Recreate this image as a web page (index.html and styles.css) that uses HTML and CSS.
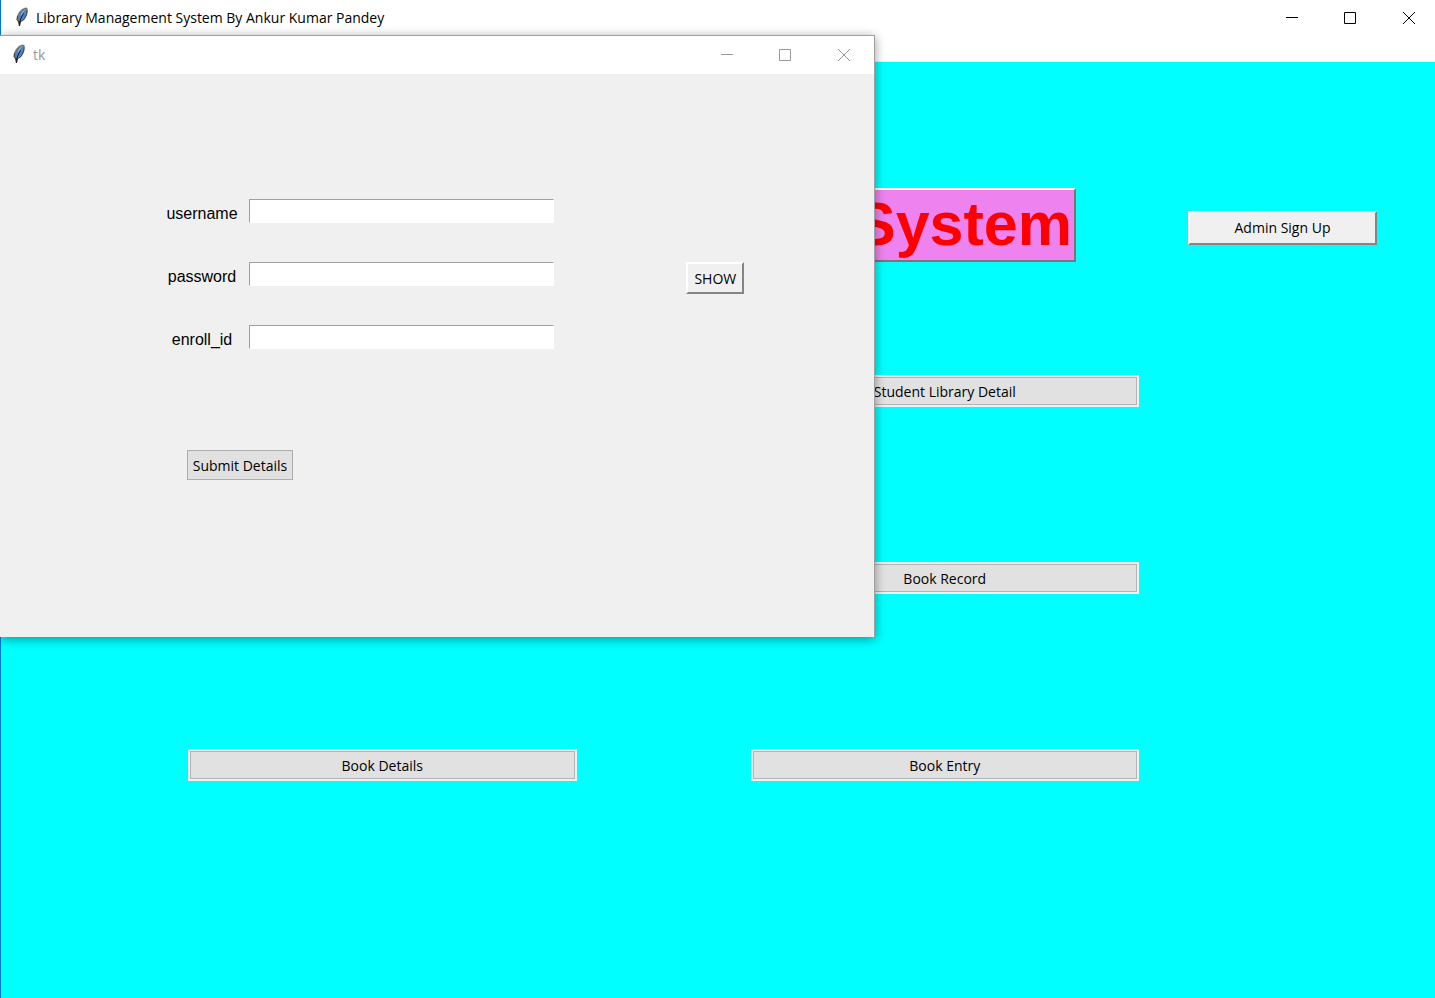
FILE: index.html
```
<!DOCTYPE html>
<html lang="en">
<head>
<meta charset="utf-8">
<title>Library Management System By Ankur Kumar Pandey</title>
<link rel="stylesheet" href="styles.css">
</head>
<body>
<svg class="symbols" aria-hidden="true">
  <symbol id="feather" viewBox="0 0 14 20">
    <path d="M10.500 .5 12.500 1 12.500 5 11.500 9 9.500 12.500 6.500 15 3 15 1.500 12.500 2 9 4 5 7 2z" fill="#77736d"/>
    <path d="M10.500 1.500 11.500 2 11.500 5.500 10.500 9 8.500 12 6 14 4 13.500 3.500 11.500 5 7 7.500 3.500z" fill="#4a86cc"/>
    <path d="M10 2.500 7.500 5 6 8.500" fill="none" stroke="#8fbcec"/>
    <path d="M12.200 3 11.800 7 10 11 7 14.200M2.500 9 2.200 12.500 3.500 14.500" fill="none" stroke="#3a3835" stroke-width=".8"/>
    <path d="M8.500 6.500 6.500 10 5 14 4.300 19" fill="none" stroke="#0b1219"/>
    <path d="M3 14.500h3l-1 4.500H4z" fill="#24211e"/>
  </symbol>
  <symbol id="minimize" viewBox="0 0 12 12"><path d="M0 5.500h12" fill="none" stroke="currentColor"/></symbol>
  <symbol id="maximize" viewBox="0 0 12 12"><path d="M.5 .5h11v11H.5z" fill="none" stroke="currentColor"/></symbol>
  <symbol id="close" viewBox="0 0 12 12"><path d="M0 0 12 12M12 0 0 12" fill="none" stroke="currentColor"/></symbol>
</svg>

<main class="window">
  <header class="titlebar">
    <svg class="feather"><use href="#feather"/></svg>
    <span class="title">Library Management System By Ankur Kumar Pandey</span>
    <div class="controls">
      <button type="button" aria-label="Minimize"><svg><use href="#minimize"/></svg></button>
      <button type="button" aria-label="Maximize"><svg><use href="#maximize"/></svg></button>
      <button type="button" aria-label="Close"><svg><use href="#close"/></svg></button>
    </div>
  </header>
  <div class="menubar"></div>
  <div class="workspace">
    <div class="banner">
      <h1 class="heading">System</h1>
      <button type="button" class="raised signup">Admin Sign Up</button>
    </div>
    <nav class="actions">
      <button type="button" class="flat right">Student Library Detail</button>
      <button type="button" class="flat right">Book Record</button>
      <button type="button" class="flat">Book Details</button>
      <button type="button" class="flat">Book Entry</button>
    </nav>
  </div>
</main>

<section class="dialog" aria-label="tk">
  <header class="titlebar inactive">
    <svg class="feather"><use href="#feather"/></svg>
    <span class="title">tk</span>
    <div class="controls">
      <button type="button" aria-label="Minimize"><svg><use href="#minimize"/></svg></button>
      <button type="button" aria-label="Maximize"><svg><use href="#maximize"/></svg></button>
      <button type="button" aria-label="Close"><svg><use href="#close"/></svg></button>
    </div>
  </header>
  <form class="form">
    <div class="fields">
      <label for="username">username</label>
      <input id="username" type="text">
      <label for="password">password</label>
      <input id="password" type="password">
      <button type="button" class="raised show">SHOW</button>
      <label for="enroll">enroll_id</label>
      <input id="enroll" type="text">
    </div>
    <button type="button" class="submit">Submit Details</button>
  </form>
</section>
</body>
</html>
```
FILE: styles.css
```
* {
  box-sizing: border-box;
}

body {
  margin: 0;
  position: relative;
  overflow: hidden;
  font-family: "Open Sans", "Noto Sans", sans-serif;
  font-size: 14px;
  color: #000;
}

button {
  font: inherit;
  color: inherit;
  padding: 0;
}

.symbols {
  position: absolute;
  width: 0;
  height: 0;
}

.window {
  display: flex;
  flex-direction: column;
  min-height: 100vh;
  border-left: 1px solid #0078d7;
  background: #fff;
}

.titlebar {
  display: flex;
  align-items: center;
  height: 36px;
  padding: 0 0 2px 14px;
  background: #fff;
}

.feather {
  width: 14px;
  height: 20px;
  margin-right: 7px;
}

.controls {
  display: flex;
  margin-left: auto;
}

.controls button {
  display: flex;
  align-items: center;
  justify-content: center;
  width: 58px;
  height: 34px;
  padding-top: 2px;
  border: 0;
  background: transparent;
}

.controls button:last-child {
  width: 60px;
}

.window .controls {
  margin-right: -4px;
}

.controls svg {
  width: 12px;
  height: 12px;
}

.menubar {
  height: 26px;
  border-bottom: 1px solid #f0f0f0;
}

.workspace {
  flex: 1;
  padding: 126px 58px 0 187px;
  background: #0ff;
}

.banner {
  display: flex;
  align-items: center;
  justify-content: space-between;
  margin-bottom: 113px;
}

.heading {
  flex: 1;
  margin: 0 112px 0 0;
  padding: 0 2px 1px 0;
  border: 2px solid;
  border-color: #fff #777 #777 #fff;
  background: violet;
  color: red;
  font: bold 61px/69px "Liberation Sans", Arial, sans-serif;
  text-align: right;
}

.raised {
  border: 2px solid;
  border-color: #fff #858585 #858585 #fff;
  background: #f0f0f0;
}

.signup {
  width: 189px;
  height: 34px;
  margin-top: 5px;
}

.actions {
  display: grid;
  grid-template-columns: 1fr 1fr;
  gap: 155px 174px;
  margin-right: 238px;
}

.right {
  grid-column: 2;
}

.flat {
  height: 32px;
  border: 2px solid #f0f0f0;
  background: #e1e1e1;
  box-shadow: inset 0 0 0 1px #b4b4b4;
}

.dialog {
  position: absolute;
  top: 35px;
  left: 0;
  width: 61%;
  border: solid #a0a0a0;
  border-width: 1px 1px 0 0;
  background: #f0f0f0;
  box-shadow: 0 2px 10px rgba(0, 0, 0, 0.4);
}

.inactive {
  height: 38px;
  padding-left: 12px;
}

.inactive .title,
.inactive .controls button {
  color: #999;
}

.form {
  padding: 125px 130px 157px 160px;
}

.fields {
  display: grid;
  grid-template-columns: 84px 305px 1fr;
  grid-auto-rows: 24px;
  gap: 39px 5px;
  font: 16px/24px "Liberation Sans", Arial, sans-serif;
}

.fields label {
  grid-column: 1;
  padding-top: 3px;
  text-align: center;
}

.fields input {
  min-width: 0;
  height: 24px;
  padding: 0 4px;
  border: 1px solid;
  border-color: #a0a0a0 #fff #fff #a0a0a0;
  background: #fff;
  font: inherit;
  outline: 0;
}

.show {
  justify-self: end;
  width: 58px;
  height: 32px;
  font: 14px "Open Sans", "Noto Sans", sans-serif;
}

.submit {
  width: 106px;
  height: 30px;
  margin: 101px 0 0 27px;
  border: 1px solid #adadad;
  background: #e1e1e1;
}
```
